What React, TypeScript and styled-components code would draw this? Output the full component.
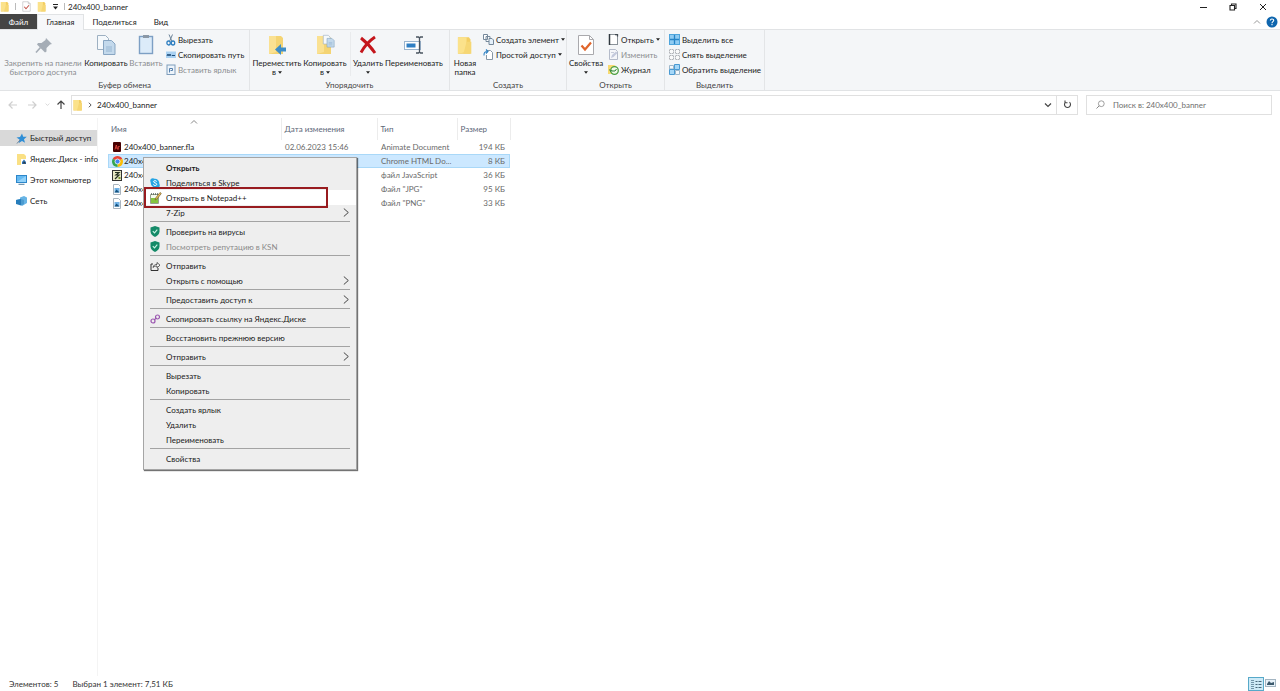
import React from "react";
import styled, { createGlobalStyle, css } from "styled-components";

const GlobalStyle = createGlobalStyle`
  * { box-sizing: border-box; }
  body { margin: 0; background: #fff; }
  body, button, input, table {
    font-family: Lato, "Noto Sans", sans-serif;
    font-size: 8px;
    line-height: 10px;
    color: #222;
  }
  button { padding: 0; border: 0; background: none; }
  a { color: inherit; text-decoration: none; }
  svg { display: block; flex: none; }
`;

const Window = styled.div`
  position: relative;
  display: flex;
  flex-direction: column;
  min-height: 100vh;
  overflow: hidden;
`;

/* Title bar */
const TitleBar = styled.header`
  display: flex;
  align-items: center;
  height: 14px;
  padding: 0 2px 1px 0;
`;
const QuickTools = styled.div`
  display: flex;
  align-items: center;
  gap: 5px;
`;
const Divider = styled.span`
  width: 1px;
  height: 7px;
  background: #bbb;
`;
const Title = styled.h1`
  flex: 1;
  margin: 0 0 0 3px;
  font-size: 8px;
  font-weight: 400;
`;
const WindowButton = styled.button`
  display: flex;
  justify-content: center;
  align-items: center;
  width: 30px;
  height: 14px;
`;

/* Ribbon tabs */
const TabRow = styled.nav`
  display: flex;
  align-items: stretch;
  height: 16px;
  border-bottom: 1px solid #e1e3e5;
`;
const Tab = styled.button<{ $kind?: "file" | "active"; $width: number }>`
  width: ${(p) => p.$width}px;
  height: 16px;
  ${(p) => p.$kind === "file" && css`background: #454545; color: #fff; height: 15px;`}
  ${(p) =>
    p.$kind === "active" &&
    css`
      padding-bottom: 1px;
      background: #f7f8fa;
      border: 1px solid #e1e3e5;
      border-bottom: 0;
    `}
`;
const TabTools = styled.div`
  display: flex;
  align-items: center;
  gap: 5px;
  margin-left: auto;
  padding-right: 2px;
`;

/* Ribbon body */
const Ribbon = styled.section`
  display: flex;
  height: 61px;
  background: #f4f6f8;
  border-bottom: 1px solid #e1e3e5;
`;
const Group = styled.div<{ $width: number }>`
  display: flex;
  flex-direction: column;
  flex: none;
  width: ${(p) => p.$width}px;
  border-right: 1px solid #e3e5e7;
`;
const GroupBody = styled.div<{ $inset?: number }>`
  display: flex;
  flex: 1;
  padding: 2px 0 0 ${(p) => p.$inset || 0}px;
`;
const GroupLabel = styled.div`
  height: 10px;
  text-align: center;
  color: #444;
`;
const BigButton = styled.button<{ $width: number; $muted?: boolean }>`
  display: flex;
  flex-direction: column;
  align-items: center;
  flex: none;
  width: ${(p) => p.$width}px;
  line-height: 9px;
  white-space: nowrap;
  color: ${(p) => (p.$muted ? "#8b8d90" : "#222")};
  svg.big { margin: 2px 0 3px; }
`;
const Line = styled.span`
  display: flex;
  align-items: center;
  gap: 2px;
  min-height: 9px;
`;
const SmallColumn = styled.div`
  display: flex;
  flex-direction: column;
  padding-left: 3px;
`;
const SmallButton = styled.button<{ $muted?: boolean }>`
  display: flex;
  align-items: center;
  gap: 2px;
  height: 15px;
  white-space: nowrap;
  color: ${(p) => (p.$muted ? "#8b8d90" : "#222")};
`;
const InnerRule = styled.span`
  width: 1px;
  height: 44px;
  margin: 0 2px 0 1px;
  background: #e9ebed;
`;

/* Address row */
const AddressRow = styled.div`
  display: flex;
  align-items: center;
  height: 27px;
  padding: 0 8px 0 6px;
`;
const NavButtons = styled.div`
  display: flex;
  align-items: center;
  width: 65px;
`;
const NavButton = styled.button<{ $width: number }>`
  display: flex;
  justify-content: center;
  width: ${(p) => p.$width}px;
`;
const AddressBox = styled.div`
  display: flex;
  align-items: center;
  flex: 1;
  gap: 4px;
  height: 20px;
  padding: 0 4px 0 1px;
  border: 1px solid #e0e0e0;
`;
const Crumb = styled.a`
  flex: 1;
`;
const Refresh = styled.button`
  display: flex;
  justify-content: center;
  align-items: center;
  width: 21px;
  height: 20px;
  border: 1px solid #e0e0e0;
  border-left: 0;
`;
const Search = styled.label`
  display: flex;
  align-items: center;
  gap: 8px;
  width: 186px;
  height: 20px;
  margin-left: 8px;
  padding-left: 9px;
  border: 1px solid #e0e0e0;
`;
const SearchInput = styled.input`
  flex: 1;
  min-width: 0;
  padding: 0;
  border: 0;
  outline: 0;
  background: none;
  &::placeholder { color: #6f6f6f; opacity: 1; }
`;

/* Main area */
const Main = styled.main`
  display: flex;
  flex: 1;
`;
const Sidebar = styled.nav`
  display: flex;
  flex-direction: column;
  gap: 5px;
  width: 98px;
  padding-top: 12px;
  border-right: 1px solid #f4f4f4;
`;
const SideLink = styled.a<{ $active?: boolean }>`
  display: flex;
  align-items: center;
  gap: 3px;
  height: 16px;
  padding-left: 16px;
  white-space: nowrap;
  background: ${(p) => (p.$active ? "#d9d9d9" : "transparent")};
`;
const Files = styled.table`
  table-layout: fixed;
  width: 402px;
  margin-left: 10px;
  align-self: flex-start;
  border-collapse: collapse;
`;
const HeadCell = styled.th`
  position: relative;
  height: 22px;
  padding: 0 0 1px 3px;
  border-right: 1px solid #ececec;
  text-align: left;
  font-weight: 400;
  color: #5c6678;
`;
const SortMark = styled.span`
  position: absolute;
  top: 0;
  left: 82px;
`;
const Row = styled.tr<{ $selected?: boolean }>`
  height: 14px;
  ${(p) => p.$selected && css`background: #cce8ff; outline: 1px solid #a9d8f8; outline-offset: -1px;`}
`;
const Cell = styled.td<{ $end?: boolean; $strong?: boolean }>`
  padding: 0 ${(p) => (p.$end ? 5 : 0)}px 0 4px;
  text-align: ${(p) => (p.$end ? "right" : "left")};
  white-space: nowrap;
  color: ${(p) => (p.$strong ? "#222" : "#6a6a6a")};
`;
const FileName = styled.span`
  display: flex;
  align-items: center;
  gap: 2px;
`;
const FileIcon = styled.span`
  display: flex;
  justify-content: center;
  width: 10px;
`;

/* Context menu */
const Menu = styled.div`
  position: absolute;
  top: 157px;
  left: 143px;
  width: 214px;
  padding: 2px 0 3px;
  background: #eee;
  border: 1px solid #a5a5a5;
  box-shadow: 1px 1px 1px rgba(0, 0, 0, 0.55);
`;
const MenuItem = styled.button<{ $bold?: boolean; $muted?: boolean; $hover?: boolean }>`
  position: relative;
  display: flex;
  align-items: center;
  width: 100%;
  height: 15px;
  padding: 0 7px 0 6px;
  text-align: left;
  white-space: nowrap;
  font-weight: ${(p) => (p.$bold ? 700 : 400)};
  color: ${(p) => (p.$muted ? "#8a8a8a" : "#1a1a1a")};
  background: ${(p) => (p.$hover ? "#fff" : "transparent")};
`;
const MenuIcon = styled.span`
  width: 16px;
`;
const MenuText = styled.span`
  flex: 1;
`;
const MenuRule = styled.hr`
  height: 1px;
  margin: 1px 6px 2px;
  border: 0;
  background: #a3a3a3;
`;
const Marker = styled.span`
  position: absolute;
  top: -3px;
  left: 0;
  width: 184px;
  height: 21px;
  border: 2px solid #981b1f;
`;

/* Status bar */
const StatusBar = styled.footer`
  display: flex;
  align-items: center;
  gap: 14px;
  height: 15px;
  padding: 0 4px 0 9px;
  color: #333;
`;
const ViewButtons = styled.div`
  display: flex;
  align-items: center;
  gap: 1px;
  margin-left: auto;
`;

/* Icons */
const Folder = ({ w = 10, h = 11, big = false }) => (
  <svg className={big ? "big" : undefined} width={w} height={h} viewBox={big ? "-2 -1 14 14" : "0 0 10 12"}>
    <path d="M.5 1h7l1 1.500v9h-8z" fill="#f3ce62" />
    <path d="M.5 1h5.500v9.500l-5.500 1z" fill="#fbe28b" />
    <path d="M6 4h3v7.500H4z" fill="#f6d774" />
  </svg>
);
const CheckDoc = ({ size = 11, big = false }) => (
  <svg className={big ? "big" : undefined} width={size} height={size} viewBox="0 0 22 22">
    <path d="M3.500 1.500h11l4 4v15h-15z" fill="#fff" stroke="#a9a9ad" />
    <path d="M14.500 1.500v4h4" fill="none" stroke="#a9a9ad" />
    <path d="M6.500 11.500l3.500 4 6-7" fill="none" stroke={big ? "#e0652b" : "#c4574e"} strokeWidth="2.200" />
  </svg>
);
const Caret = () => (
  <svg width="4" height="3" viewBox="0 0 5 3"><path d="M0 0h5L2.500 3z" fill="#222" /></svg>
);
const QuickCaret = () => (
  <svg width="7" height="6" viewBox="0 0 7 6"><path d="M1 .5h5" stroke="#222" /><path d="M1 2.500h5L3.500 5.500z" fill="#222" /></svg>
);
const Pin = () => (
  <svg className="big" width="22" height="22" viewBox="0 0 22 22">
    <path d="M14 4l6 6-2 .5-3.500 3.500v3.500l-1.500 1-8-8 1-1.500 3.500 0L13.500 6z" fill="#a5adb6" />
    <path d="M8.500 13.500L4 18.500" stroke="#a5adb6" strokeWidth="1.600" />
  </svg>
);
const Sheets = ({ x = 0, y = 0, s = 1, c = "#c3d9ec" }) => (
  <g transform={`translate(${x} ${y}) scale(${s})`}>
    <path d="M.5.5h8l3 3v11H.500z" fill="#f5f9fc" stroke="#9db0c2" />
    <path d="M6.500 5.500h8l3.500 3.500v10.500H6.500z" fill={c} stroke="#87a5c2" />
    <path d="M9 12h6M9 14h6M9 16h6" stroke="#8eafce" strokeWidth=".8" />
  </g>
);
const CopyBig = () => (
  <svg className="big" width="22" height="22" viewBox="0 0 22 22"><Sheets x={2} y={1} /></svg>
);
const PasteBig = () => (
  <svg className="big" width="22" height="22" viewBox="0 0 22 22">
    <rect x="4.500" y="2.500" width="13" height="17" fill="#dcebf9" stroke="#7d9fc4" strokeWidth="1.400" />
    <path d="M8 1h6v3H8z" fill="#8b98a6" />
  </svg>
);
const Scissors = () => (
  <svg width="10" height="12" viewBox="0 0 10 12">
    <path d="M3 .5l3 7M6.500.500l-3 7" stroke="#6d8499" strokeWidth="1" />
    <ellipse cx="2.600" cy="9" rx="1.700" ry="2" fill="none" stroke="#2f7fc1" strokeWidth="1.300" />
    <ellipse cx="7" cy="9" rx="1.700" ry="2" fill="none" stroke="#2f7fc1" strokeWidth="1.300" />
  </svg>
);
const PathIcon = () => (
  <svg width="10" height="8" viewBox="0 0 10 8">
    <rect y=".5" width="10" height="6.500" fill="#a9d1f2" />
    <path d="M1 5l1-2 1 2 1-2 1 2" fill="none" stroke="#1e4d7b" /><path d="M6 4.500h3" stroke="#1e4d7b" />
  </svg>
);
const ShortcutIcon = () => (
  <svg width="10" height="11" viewBox="0 0 10 11">
    <rect x="1" y="1" width="8" height="9.500" fill="#edf4fb" stroke="#7f9dbb" />
    <path d="M3.500 8.500V4.500h3v2h-2" fill="none" stroke="#5580ad" />
  </svg>
);
const MoveBig = () => (
  <svg className="big" width="22" height="22" viewBox="0 0 22 22">
    <path d="M3 2h12l2 2v16H3z" fill="#f4d473" /><path d="M3 2h7v16l-7 2z" fill="#fae192" />
    <path d="M20 13.500h-5v-3.500l-6 5.500 6 5.500v-3.500h5z" fill="#3d8dc8" />
  </svg>
);
const CopyToBig = () => (
  <svg className="big" width="22" height="22" viewBox="0 0 22 22">
    <path d="M3 2h12l2 2v16H3z" fill="#f4d473" /><path d="M3 2h7v16l-7 2z" fill="#fae192" />
    <Sheets x={9} y={1} s={0.62} />
  </svg>
);
const DeleteBig = () => (
  <svg className="big" width="22" height="22" viewBox="0 0 22 22">
    <path d="M4 4c5 4 10 9 14 15M18 3C12 7 7 13 4 18.500" fill="none" stroke="#c4161c" strokeWidth="2.900" />
  </svg>
);
const RenameBig = () => (
  <svg className="big" width="22" height="22" viewBox="0 0 22 22">
    <rect x="1.500" y="7.500" width="16" height="8" fill="#fff" stroke="#9ab5cf" />
    <rect x="3.500" y="9.500" width="9" height="4" fill="#2f7fc4" />
    <path d="M13 3h2.500l1 1 1-1H20M16.500 4v14M13 19h2.500l1-1 1 1H20" fill="none" stroke="#4a5560" strokeWidth="1.300" />
  </svg>
);
const NewItem = () => (
  <svg width="11" height="11" viewBox="0 0 11 11">
    <path d="M.5.500h4v5h-4zM3 2.500h4v5H3z" fill="#fff" stroke="#75889a" />
    <path d="M6 4.500h3l1.500 1.500v4.500H6z" fill="#e5f0fa" stroke="#75889a" />
  </svg>
);
const EasyAccess = () => (
  <svg width="11" height="11" viewBox="0 0 11 11">
    <path d="M3.500 1.500h4l2 2v7h-6V6" fill="#fff" stroke="#8797a5" />
    <path d="M1 6.500C.800 3.500 2 2.500 4.500 2.500M3 .5l2 2-2 2" fill="none" stroke="#2f82c3" strokeWidth="1.100" />
  </svg>
);
const OpenIcon = () => (
  <svg width="11" height="11" viewBox="0 0 11 11">
    <rect x="1.500" y=".5" width="8" height="10" fill="#fff" stroke="#8a9299" />
    <path d="M1.500 0v11" stroke="#30383f" strokeWidth="1.500" /><path d="M7 .5h2.500v2" fill="none" stroke="#444c53" strokeWidth="1.300" />
  </svg>
);
const EditIcon = () => (
  <svg width="11" height="11" viewBox="0 0 11 11">
    <path d="M1.500.500h6l2 2v8h-8z" fill="#f5f6fa" stroke="#b4bbca" />
    <path d="M3 9l1-3 4-3.500L9.500 4l-4 4z" fill="#c3c9dc" /><path d="M3 3.500h3" stroke="#c7ccda" />
  </svg>
);
const HistoryIcon = () => (
  <svg width="11" height="11" viewBox="0 0 11 11">
    <path d="M0 1h6l2 1v8H0z" fill="#f7da72" />
    <circle cx="6.500" cy="6.500" r="3.800" fill="#f0fae9" stroke="#4b9e42" strokeWidth="1.300" />
    <path d="M4 7h3l1.500-2M1.500 5.500l1.200 2 1.500-1.500" fill="none" stroke="#2f8238" />
  </svg>
);
const Tiles = ({ kind }: { kind: "all" | "none" | "invert" }) => (
  <svg width="11" height="11" viewBox="0 0 11 11">
    {kind === "all" && (
      <>
        <rect width="11" height="11" fill="#8fcbf2" />
        <path d="M5.500 0v11M0 5.500h11" stroke="#2583c6" strokeWidth="1.300" />
        <rect x=".5" y=".5" width="10" height="10" fill="none" stroke="#4fa5dc" />
      </>
    )}
    {kind === "none" && (
      <path d="M.5.500h4v4h-4zM6.500.500h4v4h-4zM.5 6.500h4v4h-4zM6.500 6.500h4v4h-4z" fill="#fafafa" stroke="#a9adb1" strokeDasharray="1.500 .5" strokeWidth=".9" />
    )}
    {kind === "invert" && (
      <>
        <path d="M.5 1.500h4v3.500h-4zM6.500 6.500h4v4h-4z" fill="#f4f8fb" stroke="#9db7ca" />
        <path d="M5.500.500h5v5h-5zM.500 5.500h5v5h-5z" fill="#a5d7f8" stroke="#4a9ad2" />
      </>
    )}
  </svg>
);
const Arrow = ({ turn = 0, color = "#cfcfcf" }) => (
  <svg width="10" height="10" viewBox="0 0 10 10">
    <path d="M9 5H1.500M4.500 1.500L1 5l3.500 3.500" transform={`rotate(${turn} 5 5)`} fill="none" stroke={color} strokeWidth="1.200" />
  </svg>
);
const Chevron = ({ turn = 0, size = 8, color = "#444", weight = 1.2 }) => (
  <svg width={size} height={size} viewBox="0 0 8 8">
    <path d="M2.500 1l3 3-3 3" transform={`rotate(${turn} 4 4)`} fill="none" stroke={color} strokeWidth={weight} />
  </svg>
);
const SubArrow = () => (
  <svg width="6" height="9" viewBox="0 0 6 9"><path d="M.800.500l4.500 4-4.500 4" fill="none" stroke="#444" /></svg>
);
const ReloadIcon = () => (
  <svg width="9" height="9" viewBox="0 0 9 9">
    <path d="M6.500 2.200A3 3 0 1 1 2.500 2.200M2 .500v2.300h2.500" fill="none" stroke="#444" strokeWidth="1.100" />
  </svg>
);
const SearchIcon = () => (
  <svg width="9" height="9" viewBox="0 0 9 9">
    <circle cx="5.300" cy="3.700" r="2.900" fill="none" stroke="#888" strokeWidth=".8" /><path d="M3.200 5.800L.500 8.500" stroke="#888" />
  </svg>
);
const Star = () => (
  <svg width="11" height="11" viewBox="0 0 11 11">
    <path d="M6 .5l1.200 3.200 3.600.1-2.800 2.400 1 3.600-3-1.800L2.800 10l.7-3.400L.500 4.500l3.500-.5z" fill="#2f8ed6" />
    <path d="M1 10.500L4 7" stroke="#67829b" />
  </svg>
);
const DiskIcon = () => (
  <svg width="11" height="11" viewBox="0 0 11 11">
    <path d="M1 0h7l2 2v9H1z" fill="#fae084" /><rect x="5" y="5" width="6" height="6" fill="#fff" />
    <path d="M6 10V8l2-2.500L10 8v2z" fill="#2e6faf" /><path d="M8 7.500l2 2H7z" fill="#333" />
  </svg>
);
const PcIcon = () => (
  <svg width="11" height="10" viewBox="0 0 11 10">
    <rect x=".5" y=".5" width="10" height="7" fill="#64b9f2" stroke="#2d86c9" /><path d="M1 7l9-6v6z" fill="#92d2fa" /><path d="M2.500 9.300h6" stroke="#537f9f" />
  </svg>
);
const NetIcon = () => (
  <svg width="11" height="10" viewBox="0 0 11 10">
    <path d="M0 4l4-1V1.500L8 0l3 1.500V7L6 10z" fill="#67b4e5" /><path d="M0 4l5-1v6.500l-5-1.500z" fill="#277dbb" /><path d="M5 3l3 1v4L5 9.500z" fill="#4b9bd0" />
  </svg>
);
const FlaIcon = () => (
  <svg width="10" height="10" viewBox="0 0 10 10">
    <rect x="1" width="8" height="10" rx="1" fill="#470000" /><path d="M3 7.500L4.300 3l1.300 4.500M3.500 6h1.800M6.300 7.500V4.500h1.400" fill="none" stroke="#ef4b43" strokeWidth=".8" />
  </svg>
);
const ChromeIcon = () => (
  <svg width="11" height="11" viewBox="0 0 22 22">
    <path d="M11 11L1.500 5.500A11 11 0 0 1 20.500 5.500z" fill="#e94235" />
    <path d="M11 11L20.500 5.500A11 11 0 0 1 11 22z" fill="#fbbd08" />
    <path d="M11 11v11A11 11 0 0 1 1.500 5.500z" fill="#35a552" />
    <circle cx="11" cy="11" r="5" fill="#4285f4" stroke="#fff" strokeWidth="1.500" />
  </svg>
);
const JsIcon = () => (
  <svg width="10" height="11" viewBox="0 0 10 11">
    <rect x=".5" y=".5" width="9" height="10" fill="#e8e8c5" stroke="#333" />
    <path d="M3 2.500h4L4 5h3L3 9" fill="none" stroke="#242f20" strokeWidth="1.200" /><path d="M6.500 7h2v2h-2z" fill="#74912a" />
  </svg>
);
const ImageIcon = () => (
  <svg width="10" height="11" viewBox="0 0 10 11">
    <path d="M1.500.500h5l2 2v8h-7z" fill="#fff" stroke="#a9b4be" /><rect x="2.500" y="4" width="5" height="4.500" fill="#72b3e7" /><path d="M2.500 8.500l2-3 3 3z" fill="#15527e" />
  </svg>
);
const SkypeIcon = () => (
  <svg width="10" height="10" viewBox="0 0 20 20">
    <circle cx="10" cy="10" r="8.500" fill="#26a4e3" /><circle cx="5.500" cy="5.500" r="5" fill="#26a4e3" /><circle cx="14.500" cy="14.500" r="5" fill="#26a4e3" />
    <path d="M13.500 7C12 4.500 7 5 7 7.500s6.500 2 6.500 5-5.500 3.500-7 .5" fill="none" stroke="#fff" strokeWidth="2" />
  </svg>
);
const NotepadIcon = () => (
  <svg width="12" height="12" viewBox="0 0 12 12">
    <path d="M.5 2.500h8v9h-8z" fill="#f6fbef" stroke="#98a08e" /><path d="M1 6h7v5H1z" fill="#85c43f" /><path d="M1 2h7.500" stroke="#56615a" strokeDasharray="1 1" strokeWidth="1.500" />
    <path d="M5 8l1-2.500L10 .5l1.300 1L7 7z" fill="#ebc15b" stroke="#795e2c" strokeWidth=".7" />
  </svg>
);
const ShieldIcon = () => (
  <svg width="10" height="11" viewBox="0 0 10 11">
    <path d="M5 0l4.500 1.500v4C9.500 8 7.500 10 5 11 2.500 10 .500 8 .500 5.500v-4z" fill="#148a68" /><path d="M2.800 5.200l1.700 1.700 2.800-3.200" fill="none" stroke="#c9f5e5" strokeWidth="1.100" />
  </svg>
);
const ShareIcon = () => (
  <svg width="11" height="10" viewBox="0 0 11 10">
    <path d="M3 3H1v6.500h7V7" fill="none" stroke="#333" /><path d="M3 6.500c.5-2.500 2-3 4-3V1.500l3 2.700-3 2.500V5C5 5 4 5.500 3 6.500z" fill="#fff" stroke="#333" strokeWidth=".8" />
  </svg>
);
const LinkIcon = () => (
  <svg width="11" height="10" viewBox="0 0 11 10">
    <circle cx="3" cy="7" r="2" fill="none" stroke="#9b57b0" strokeWidth="1.200" /><circle cx="7.500" cy="3" r="2" fill="none" stroke="#9b57b0" strokeWidth="1.200" /><path d="M4 6l2.500-2" stroke="#9b57b0" strokeWidth="1.200" />
  </svg>
);

type Entry = { text: string; icon?: React.ReactNode; bold?: boolean; muted?: boolean; sub?: boolean; hover?: boolean };
const menu: Entry[][] = [
  [
    { text: "Открыть", bold: true },
    { text: "Поделиться в Skype", icon: <SkypeIcon /> },
    { text: "Открыть в Notepad++", icon: <NotepadIcon />, hover: true },
    { text: "7-Zip", sub: true },
  ],
  [
    { text: "Проверить на вирусы", icon: <ShieldIcon /> },
    { text: "Посмотреть репутацию в KSN", icon: <ShieldIcon />, muted: true },
  ],
  [{ text: "Отправить", icon: <ShareIcon /> }, { text: "Открыть с помощью", sub: true }],
  [{ text: "Предоставить доступ к", sub: true }],
  [{ text: "Скопировать ссылку на Яндекс.Диске", icon: <LinkIcon /> }],
  [{ text: "Восстановить прежнюю версию" }],
  [{ text: "Отправить", sub: true }],
  [{ text: "Вырезать" }, { text: "Копировать" }],
  [{ text: "Создать ярлык" }, { text: "Удалить" }, { text: "Переименовать" }],
  [{ text: "Свойства" }],
];

const files = [
  { name: "240x400_banner.fla", icon: <FlaIcon />, date: "02.06.2023 15:46", type: "Animate Document", size: "194 КБ" },
  { name: "240x4", icon: <ChromeIcon />, date: "", type: "Chrome HTML Do...", size: "8 КБ", selected: true },
  { name: "240x4", icon: <JsIcon />, date: "", type: "файл JavaScript", size: "36 КБ" },
  { name: "240x4", icon: <ImageIcon />, date: "", type: 'Файл "JPG"', size: "95 КБ" },
  { name: "240x4", icon: <ImageIcon />, date: "", type: 'Файл "PNG"', size: "33 КБ" },
];

export default function App() {
  return (
    <Window>
      <GlobalStyle />
      <TitleBar>
        <QuickTools>
          <Folder />
          <Divider />
          <CheckDoc />
          <Folder />
          <QuickCaret />
          <Divider />
        </QuickTools>
        <Title>240x400_banner</Title>
        <WindowButton aria-label="Свернуть">
          <svg width="8" height="8" viewBox="0 0 8 8"><path d="M1 4.500h7" stroke="#222" /></svg>
        </WindowButton>
        <WindowButton aria-label="Развернуть">
          <svg width="8" height="8" viewBox="0 0 8 8"><path d="M1 2.500h4.500v4.500H1zM2.500 2V1H7v4.500H6" fill="none" stroke="#222" strokeWidth="1.100" /></svg>
        </WindowButton>
        <WindowButton aria-label="Закрыть">
          <svg width="8" height="8" viewBox="0 0 8 8"><path d="M1 1l6 6M7 1L1 7" stroke="#222" /></svg>
        </WindowButton>
      </TitleBar>

      <TabRow>
        <Tab $kind="file" $width={37}>Файл</Tab>
        <Tab $kind="active" $width={47}>Главная</Tab>
        <Tab $width={61}>Поделиться</Tab>
        <Tab $width={32}>Вид</Tab>
        <TabTools>
          <Chevron turn={-90} color="#999" weight={1} />
          <svg width="12" height="12" viewBox="0 0 12 12">
            <circle cx="6" cy="6" r="5.500" fill="#0f66ae" />
            <path d="M4.300 4.500C4.500 2.500 7.800 2.600 7.700 4.500 7.600 5.700 6 5.700 6 7.200M6 8v1.300" fill="none" stroke="#fff" strokeWidth="1.100" />
          </svg>
        </TabTools>
      </TabRow>

      <Ribbon>
        <Group $width={250}>
          <GroupBody $inset={3}>
            <BigButton $width={80} $muted><Pin /><Line>Закрепить на панели</Line><Line>быстрого доступа</Line></BigButton>
            <BigButton $width={46}><CopyBig /><Line>Копировать</Line></BigButton>
            <BigButton $width={34} $muted><PasteBig /><Line>Вставить</Line></BigButton>
            <SmallColumn>
              <SmallButton><Scissors />Вырезать</SmallButton>
              <SmallButton><PathIcon />Скопировать путь</SmallButton>
              <SmallButton $muted><ShortcutIcon />Вставить ярлык</SmallButton>
            </SmallColumn>
          </GroupBody>
          <GroupLabel>Буфер обмена</GroupLabel>
        </Group>
        <Group $width={200}>
          <GroupBody $inset={3}>
            <BigButton $width={48}><MoveBig /><Line>Переместить</Line><Line>в<Caret /></Line></BigButton>
            <BigButton $width={48}><CopyToBig /><Line>Копировать</Line><Line>в<Caret /></Line></BigButton>
            <InnerRule />
            <BigButton $width={30}><DeleteBig /><Line>Удалить</Line><Line><Caret /></Line></BigButton>
            <BigButton $width={62}><RenameBig /><Line>Переименовать</Line></BigButton>
          </GroupBody>
          <GroupLabel>Упорядочить</GroupLabel>
        </Group>
        <Group $width={117}>
          <GroupBody>
            <BigButton $width={30}><Folder w={22} h={22} big /><Line>Новая</Line><Line>папка</Line></BigButton>
            <SmallColumn>
              <SmallButton><NewItem />Создать элемент<Caret /></SmallButton>
              <SmallButton><EasyAccess />Простой доступ<Caret /></SmallButton>
            </SmallColumn>
          </GroupBody>
          <GroupLabel>Создать</GroupLabel>
        </Group>
        <Group $width={98}>
          <GroupBody>
            <BigButton $width={38}><CheckDoc size={22} big /><Line>Свойства</Line><Line><Caret /></Line></BigButton>
            <SmallColumn>
              <SmallButton><OpenIcon />Открыть<Caret /></SmallButton>
              <SmallButton $muted><EditIcon />Изменить</SmallButton>
              <SmallButton><HistoryIcon />Журнал</SmallButton>
            </SmallColumn>
          </GroupBody>
          <GroupLabel>Открыть</GroupLabel>
        </Group>
        <Group $width={100}>
          <GroupBody $inset={1}>
            <SmallColumn>
              <SmallButton><Tiles kind="all" />Выделить все</SmallButton>
              <SmallButton><Tiles kind="none" />Снять выделение</SmallButton>
              <SmallButton><Tiles kind="invert" />Обратить выделение</SmallButton>
            </SmallColumn>
          </GroupBody>
          <GroupLabel>Выделить</GroupLabel>
        </Group>
      </Ribbon>

      <AddressRow>
        <NavButtons>
          <NavButton $width={14} aria-label="Назад"><Arrow /></NavButton>
          <NavButton $width={24} aria-label="Вперед"><Arrow turn={180} /></NavButton>
          <NavButton $width={8} aria-label="Журнал"><Chevron turn={90} size={5} color="#ccc" /></NavButton>
          <NavButton $width={20} aria-label="Вверх"><Arrow turn={90} color="#444" /></NavButton>
        </NavButtons>
        <AddressBox>
          <Folder h={12} />
          <Chevron size={6} />
          <Crumb href="#">240x400_banner</Crumb>
          <Chevron turn={90} />
        </AddressBox>
        <Refresh aria-label="Обновить"><ReloadIcon /></Refresh>
        <Search>
          <SearchIcon />
          <SearchInput type="text" aria-label="Поиск" placeholder="Поиск в: 240x400_banner" />
        </Search>
      </AddressRow>

      <Main>
        <Sidebar>
          <SideLink href="#" $active><Star />Быстрый доступ</SideLink>
          <SideLink href="#"><DiskIcon />Яндекс.Диск - info</SideLink>
          <SideLink href="#"><PcIcon />Этот компьютер</SideLink>
          <SideLink href="#"><NetIcon />Сеть</SideLink>
        </Sidebar>
        <Files>
          <colgroup>
            <col width="173" />
            <col width="96" />
            <col width="80" />
            <col width="53" />
          </colgroup>
          <thead>
            <tr>
              <HeadCell>Имя<SortMark><Chevron turn={-90} color="#888" weight={1} /></SortMark></HeadCell>
              <HeadCell>Дата изменения</HeadCell>
              <HeadCell>Тип</HeadCell>
              <HeadCell>Размер</HeadCell>
            </tr>
          </thead>
          <tbody>
            {files.map((f) => (
              <Row key={f.type} $selected={f.selected}>
                <Cell $strong><FileName><FileIcon>{f.icon}</FileIcon>{f.name}</FileName></Cell>
                <Cell>{f.date}</Cell>
                <Cell>{f.type}</Cell>
                <Cell $end>{f.size}</Cell>
              </Row>
            ))}
          </tbody>
        </Files>
      </Main>

      <StatusBar>
        <span>Элементов: 5</span>
        <span>Выбран 1 элемент: 7,51 КБ</span>
        <ViewButtons>
          <button aria-label="Таблица">
            <svg width="16" height="14" viewBox="0 0 16 14">
              <rect x=".5" y=".5" width="15" height="13" fill="#cdeaf7" stroke="#57a9c9" />
              <path d="M3 3.500h3M3 5.500h3M3 7.500h3M3 9.500h3M3 11.500h3" stroke="#5a7f94" strokeWidth=".8" />
              <path d="M7.500 4.500h2M7.500 7.500h2M7.500 10.500h2M10.500 4.500h3M10.500 7.500h3M10.500 10.500h3" stroke="#48687a" />
            </svg>
          </button>
          <button aria-label="Крупные значки">
            <svg width="11" height="9" viewBox="0 0 11 9">
              <rect x=".5" y=".5" width="10" height="7" fill="#e7f1f8" stroke="#a3b5c2" /><path d="M2 5l2-3 2 2 3-1v3H2z" fill="#3b596c" />
            </svg>
          </button>
        </ViewButtons>
      </StatusBar>

      <Menu role="menu">
        {menu.map((group, g) => (
          <React.Fragment key={g}>
            {g > 0 && <MenuRule />}
            {group.map((m) => (
              <MenuItem key={m.text} role="menuitem" $bold={m.bold} $muted={m.muted} $hover={m.hover}>
                <MenuIcon>{m.icon}</MenuIcon>
                <MenuText>{m.text}</MenuText>
                {m.sub && <SubArrow />}
                {m.hover && <Marker />}
              </MenuItem>
            ))}
          </React.Fragment>
        ))}
      </Menu>
    </Window>
  );
}
